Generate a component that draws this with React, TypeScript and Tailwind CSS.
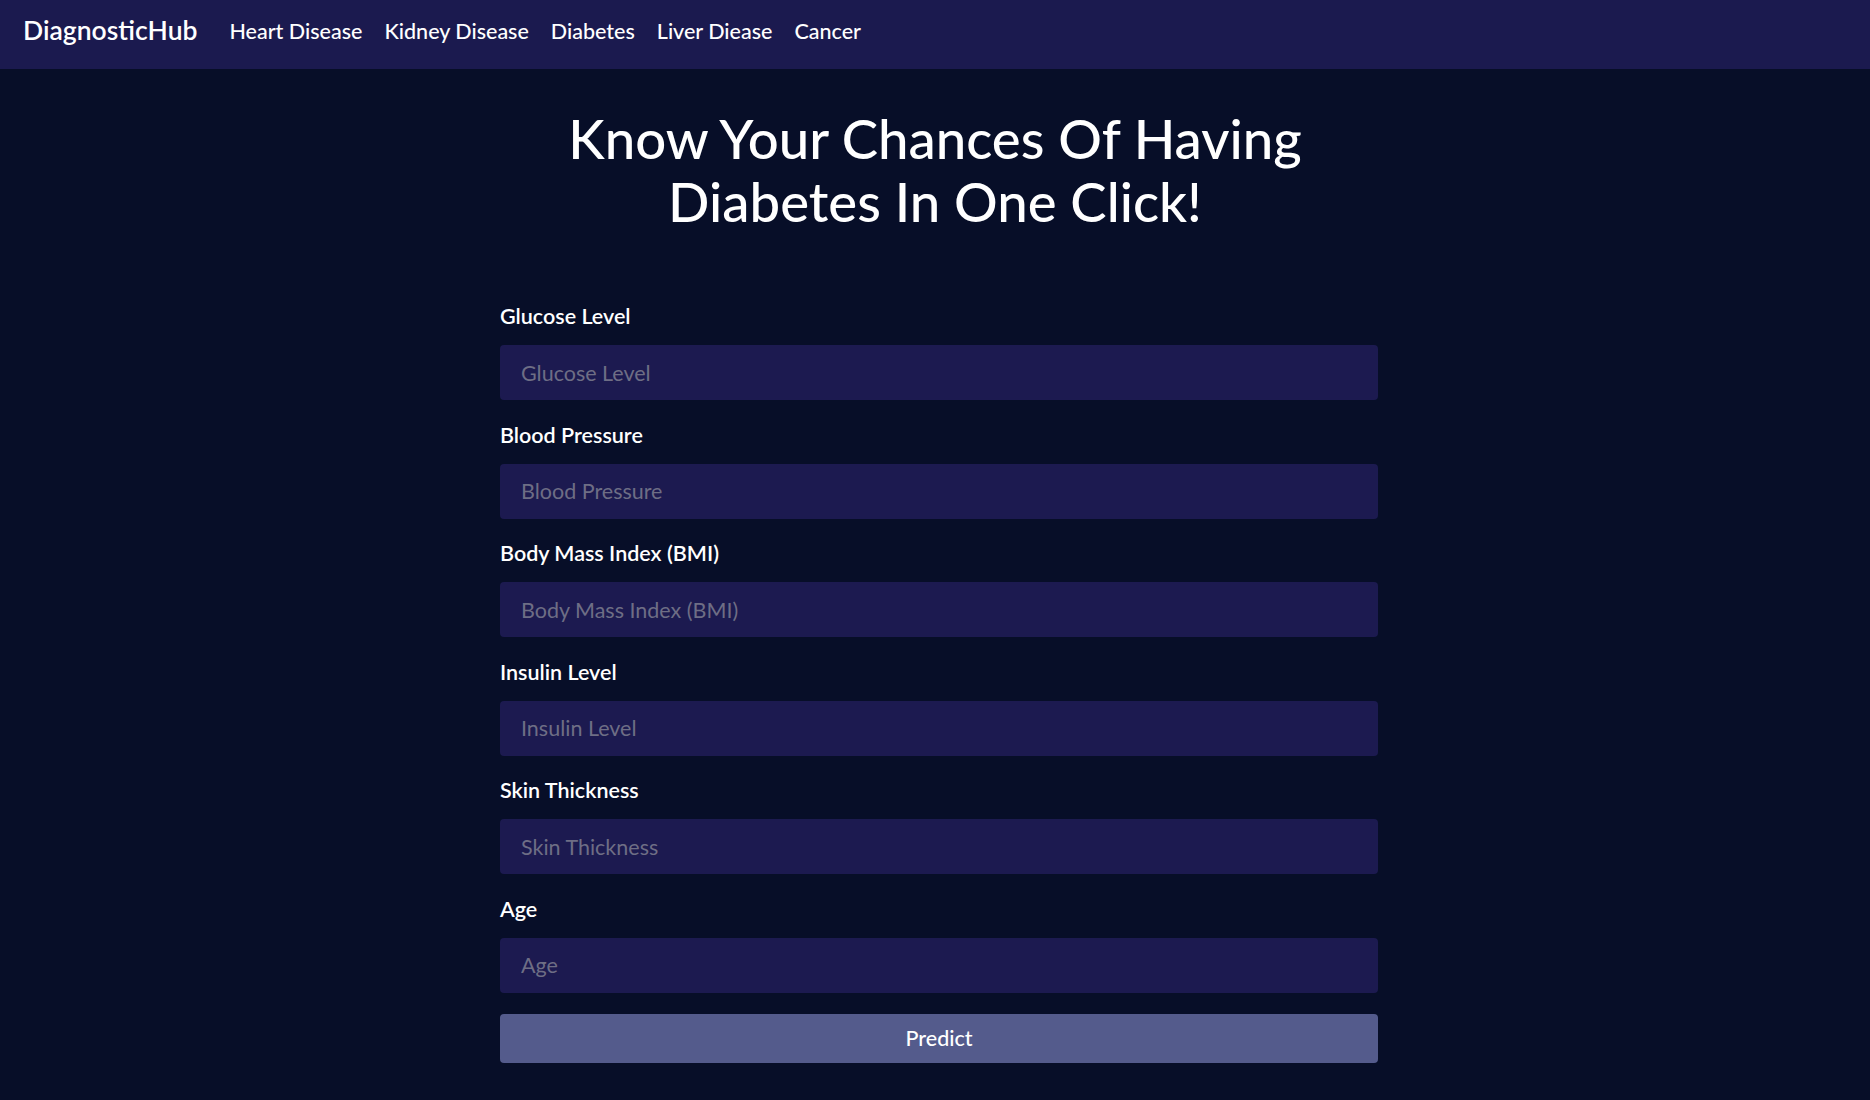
import React from "react";

const fields = [
  "Glucose Level",
  "Blood Pressure",
  "Body Mass Index (BMI)",
  "Insulin Level",
  "Skin Thickness",
  "Age",
];

const links = ["Heart Disease", "Kidney Disease", "Diabetes", "Liver Diease", "Cancer"];

export default function App() {
  return (
    <div
      className="min-h-[1100px] w-full bg-[#070e28] text-white"
      style={{ fontFamily: "Lato, 'Noto Sans', sans-serif" }}
    >
      <nav className="h-[69px] bg-[#1b1a4f] flex items-center pb-[10px] pl-[23px]">
        <span className="text-[26.5px] leading-[30px] font-semibold mr-[32px]">DiagnosticHub</span>
        <div className="flex gap-[22px] pt-[2px]">
          {links.map((l) => (
            <span key={l} className="text-[21.5px] leading-[26px] font-medium">
              {l}
            </span>
          ))}
        </div>
      </nav>

      <h1 className="mt-[38px] text-center text-[54.5px] leading-[63px] font-medium">
        Know Your Chances Of Having
        <br />
        Diabetes In One Click!
      </h1>

      <div className="flex justify-center pl-[8px] mt-[71px]">
        <form className="w-[878px] flex flex-col">
          {fields.map((f) => (
            <div key={f} className="flex flex-col mb-[22.5px]">
              <label className="text-[21.5px] leading-[24px] font-semibold">{f}</label>
              <input
                placeholder={f}
                className="mt-[17px] h-[55px] rounded-[4px] bg-[#1c1a50] px-[21px] text-[21.5px] text-white placeholder:text-[#6e6e85] outline-none"
              />
            </div>
          ))}
          <button
            type="button"
            className="-mt-px h-[49px] rounded-[4px] bg-[#545b8c] text-[21.5px] font-medium text-white"
          >
            Predict
          </button>
        </form>
      </div>
    </div>
  );
}
